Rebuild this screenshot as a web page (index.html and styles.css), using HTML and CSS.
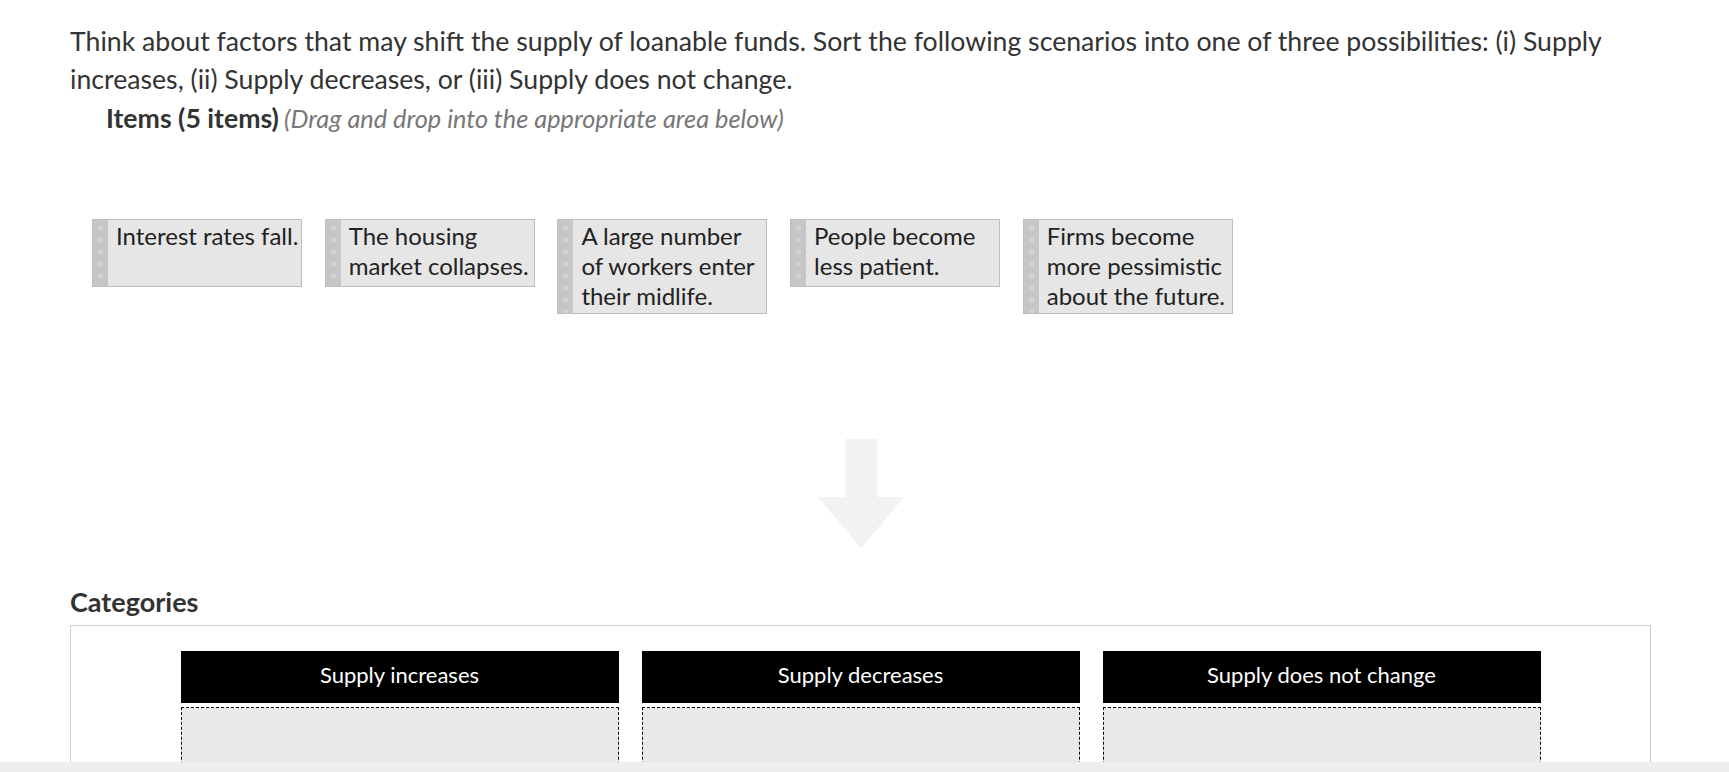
FILE: index.html
```html
<!DOCTYPE html>
<html lang="en">
<head>
<meta charset="utf-8">
<title>Loanable funds sorting</title>
<link rel="stylesheet" href="styles.css">
</head>
<body>
<div class="page">
  <p class="prompt">Think about factors that may shift the supply of loanable funds. Sort the following scenarios into one of three possibilities: (i) Supply increases, (ii) Supply decreases, or (iii) Supply does not change.</p>
  <div class="items-head"><span class="items-title">Items (5 items)</span> <span class="items-hint">(Drag and drop into the appropriate area below)</span></div>
  <div class="items">
    <div class="card"><span class="grip"></span><span class="card-text">Interest rates fall.</span></div>
    <div class="card"><span class="grip"></span><span class="card-text">The housing market collapses.</span></div>
    <div class="card"><span class="grip"></span><span class="card-text">A large number of workers enter their midlife.</span></div>
    <div class="card"><span class="grip"></span><span class="card-text">People become less patient.</span></div>
    <div class="card"><span class="grip"></span><span class="card-text">Firms become more pessimistic about the future.</span></div>
  </div>
  <div class="arrow">
    <svg width="86" height="109" viewBox="0 0 86 109"><path d="M27 0 H59 V58 H86 L43 109 L0 58 H27 Z" fill="#f2f2f2"/></svg>
  </div>
  <h2 class="cat-title">Categories</h2>
  <div class="cat-box">
    <div class="col"><div class="col-head">Supply increases</div><div class="drop"></div></div>
    <div class="col"><div class="col-head">Supply decreases</div><div class="drop"></div></div>
    <div class="col"><div class="col-head">Supply does not change</div><div class="drop"></div></div>
  </div>
</div>
<div class="hscroll"></div>
</body>
</html>
```
FILE: styles.css
```css
html, body {
  margin: 0;
  padding: 0;
  overflow: hidden;
  background: #fff;
}
.page {
  padding: 22px 78px 0 70px;
  font-family: Lato, "Open Sans", sans-serif;
  color: #333;
}
.prompt {
  margin: 0;
  font-size: 26.67px;
  line-height: 38.4px;
}
.items-head {
  margin-left: 36px;
  height: 38.4px;
  line-height: 38.4px;
}
.items-title {
  font-size: 26.67px;
  font-weight: bold;
}
.items-hint {
  margin-left: 1px;
  font-size: 25.33px;
  font-style: italic;
  color: #777;
}
.items {
  display: flex;
  align-items: flex-start;
  gap: 22.7px;
  margin: 82px 0 0 22px;
}
.card {
  display: flex;
  width: 210px;
  box-sizing: border-box;
  min-height: 68px;
  border: 1px solid #bdbdbd;
  background: #e6e6e6;
  font-size: 24px;
  line-height: 30px;
  color: #222;
}
.grip {
  flex: 0 0 15px;
  background-color: #c6c6c6;
  background-image: radial-gradient(circle, #d2d2d2 2.5px, transparent 3px);
  background-size: 15px 12px;
  background-position: 0 2px;
}
.card-text {
  padding: 1px 0 2px 8px;
}
.arrow {
  display: flex;
  justify-content: center;
  margin-top: 125px;
}
.arrow svg {
  display: block;
}
.cat-title {
  margin: 38px 0 0;
  font-size: 27px;
  line-height: 31px;
  font-weight: bold;
  color: #333;
}
.cat-box {
  margin-top: 8px;
  border: 1px solid #cfcfcf;
  padding-top: 25px;
  display: flex;
  justify-content: center;
  gap: 23px;
}
.col {
  width: 438px;
}
.col-head {
  box-sizing: border-box;
  height: 52px;
  padding-bottom: 6px;
  background: #000;
  color: #fff;
  display: flex;
  align-items: center;
  justify-content: center;
  font-size: 22px;
}
.drop {
  margin-top: 4px;
  height: 150px;
  border: 1px dashed #000;
  background: #e9e9e9;
}
.hscroll {
  position: fixed;
  left: 0;
  right: 0;
  bottom: 0;
  height: 10px;
  background: #eeeeee;
}
```
